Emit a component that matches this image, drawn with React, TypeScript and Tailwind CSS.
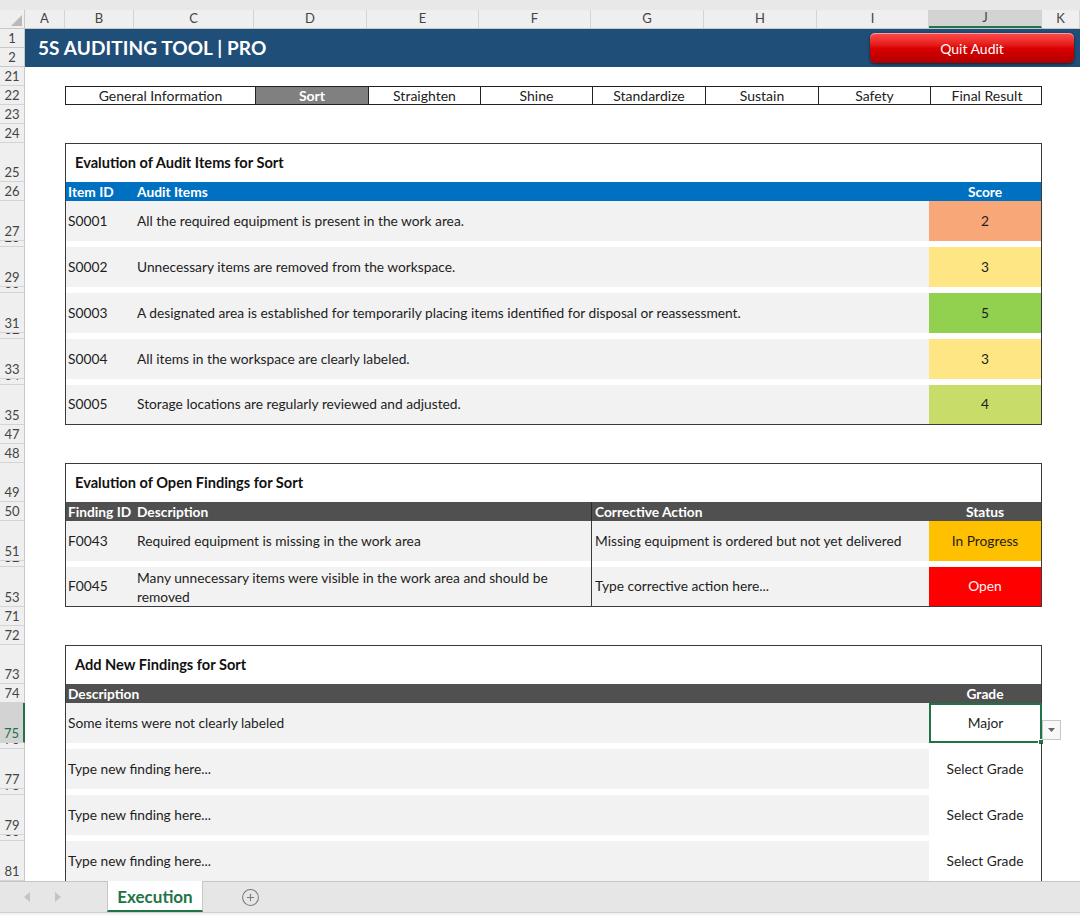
import React from "react";
import { CirclePlus } from "lucide-react";

const COLS: [string, string][] = [
  ["A", "w-[40px]"],
  ["B", "w-[69px]"],
  ["C", "w-[120px]"],
  ["D", "w-[113px]"],
  ["E", "w-[112px]"],
  ["F", "w-[112px]"],
  ["G", "w-[113px]"],
  ["H", "w-[113px]"],
  ["I", "w-[112px]"],
  ["J", "w-[113px]"],
  ["K", "w-[38px]"],
];

const TABS = [
  { label: "General Information", w: "w-[189px]" },
  { label: "Sort", w: "w-[113px]", active: true },
  { label: "Straighten", w: "w-[112px]" },
  { label: "Shine", w: "w-[112px]" },
  { label: "Standardize", w: "w-[113px]" },
  { label: "Sustain", w: "w-[113px]" },
  { label: "Safety", w: "w-[112px]" },
  { label: "Final Result", w: "w-[113px]" },
];

const AUDIT = [
  { id: "S0001", text: "All the required equipment is present in the work area.", score: 2, bg: "bg-[#f8a878]" },
  { id: "S0002", text: "Unnecessary items are removed from the workspace.", score: 3, bg: "bg-[#fee684]" },
  { id: "S0003", text: "A designated area is established for temporarily placing items identified for disposal or reassessment.", score: 5, bg: "bg-[#92d050]" },
  { id: "S0004", text: "All items in the workspace are clearly labeled.", score: 3, bg: "bg-[#fee684]" },
  { id: "S0005", text: "Storage locations are regularly reviewed and adjusted.", score: 4, bg: "bg-[#c8dc6a]" },
];

type RowProps = {
  n: string;
  h: string;
  active?: boolean;
  children?: React.ReactNode;
};

function Row({ n, h, active, children }: RowProps) {
  return (
    <div className={`flex ${h}`}>
      <div
        className={`w-[25px] shrink-0 border-b border-[#d4d4d4] flex items-end justify-center overflow-hidden text-[13px] leading-[17px] ${
          active
            ? "bg-[#d3d3d3] text-[#217346] border-r-2 border-r-[#217346]"
            : "bg-[#efefef] text-[#444] border-r border-r-[#c8c8c8]"
        }`}
      >
        {n}
      </div>
      <div className="w-[40px] shrink-0" />
      <div className="w-[977px] shrink-0 relative">{children}</div>
      <div className="flex-1" />
    </div>
  );
}

const side = "h-full border-x border-[#3a3a3a]";

function Gap({ n, split }: { n: string; split?: boolean }) {
  return (
    <Row n={n} h="h-[6px]">
      {split ? (
        <div className={`${side} flex`}>
          <div className="w-[525px]" />
          <div className="flex-1 border-l border-[#3a3a3a]" />
        </div>
      ) : (
        <div className={side} />
      )}
    </Row>
  );
}

function Title({ n, text }: { n: string; text: string }) {
  return (
    <Row n={n} h="h-[39px]">
      <div className={`${side} border-t flex items-center pl-[9px] font-bold text-[14.6px] text-[#111]`}>
        {text}
      </div>
    </Row>
  );
}

export default function App() {
  return (
    <div className="w-[1080px] h-[915px] overflow-hidden bg-white font-[Lato,Liberation_Sans,sans-serif] text-[13.75px] text-[#1e1e1e]">
      <div className="h-[10px] bg-[#e8e8e8]" />

      {/* column letters */}
      <div className="flex h-[19px] bg-[#efefef] border-b border-[#c8c8c8] text-[13px]">
        <div className="w-[25px] shrink-0 relative border-r border-[#c8c8c8]">
          <svg className="absolute right-[2px] bottom-[2px]" width="11" height="11" viewBox="0 0 11 11">
            <polygon points="11,0 11,11 0,11" fill="#b9b9b9" />
          </svg>
        </div>
        {COLS.map(([c, w]) => (
          <div
            key={c}
            className={`${w} shrink-0 flex items-center justify-center border-r border-[#d4d4d4] text-[#444] ${
              c === "J" ? "bg-[#d3d3d3] border-b-2 border-b-[#217346]" : ""
            }`}
          >
            {c}
          </div>
        ))}
        <div className="flex-1" />
      </div>

      {/* banner */}
      <div className="flex h-[38px]">
        <div className="w-[25px] shrink-0 flex flex-col text-[13px]">
          {["1", "2"].map((n) => (
            <div
              key={n}
              className="h-[19px] bg-[#efefef] border-b border-r border-[#c8c8c8] flex items-end justify-center leading-[17px] text-[#444]"
            >
              {n}
            </div>
          ))}
        </div>
        <div className="flex-1 bg-[#1f4e79] flex items-center justify-between pl-[13px] pr-[6px]">
          <span className="text-white font-bold text-[19px] tracking-[0.1px]">5S AUDITING TOOL | PRO</span>
          <button className="w-[204px] h-[30px] rounded-[5px] bg-linear-to-b from-[#ff4a4a] via-[#dc0000] to-[#b00000] shadow-[inset_0_1px_0_rgba(255,255,255,0.45),0_1px_3px_rgba(0,0,0,0.6)] text-white text-[14px]">
            Quit Audit
          </button>
        </div>
      </div>

      <Row n="21" h="h-[19px]" />
      <Row n="22" h="h-[19px]">
        <div className="h-full flex border border-[#222]">
          {TABS.map((t, i) => (
            <div
              key={t.label}
              className={`${t.w} shrink-0 flex items-center justify-center text-[14px] ${
                i > 0 ? "border-l border-[#222]" : ""
              } ${t.active ? "bg-[#808080] text-white font-bold" : "text-[#222]"}`}
            >
              {t.label}
            </div>
          ))}
        </div>
      </Row>
      <Row n="23" h="h-[19px]" />
      <Row n="24" h="h-[19px]" />

      {/* audit items */}
      <Title n="25" text="Evalution of Audit Items for Sort" />
      <Row n="26" h="h-[19px]">
        <div className={`${side} bg-[#0070c0] grid grid-cols-[68px_795px_112px] items-center font-bold text-white`}>
          <span className="pl-[2px]">Item ID</span>
          <span className="pl-[3px]">Audit Items</span>
          <span className="text-center">Score</span>
        </div>
      </Row>
      {AUDIT.map((a, i) => {
        const n = 27 + i * 2;
        const last = i === AUDIT.length - 1;
        return (
          <React.Fragment key={a.id}>
            <Row n={String(n)} h="h-[40px]">
              <div className={`${side} ${last ? "border-b" : ""} grid grid-cols-[68px_795px_112px]`}>
                <div className="bg-[#f2f2f2] flex items-center pl-[2px]">{a.id}</div>
                <div className="bg-[#f2f2f2] flex items-center pl-[3px]">{a.text}</div>
                <div className={`${a.bg} flex items-center justify-center`}>{a.score}</div>
              </div>
            </Row>
            {!last && <Gap n={String(n + 1)} />}
          </React.Fragment>
        );
      })}
      <Row n="47" h="h-[19px]" />
      <Row n="48" h="h-[19px]" />

      {/* open findings */}
      <Title n="49" text="Evalution of Open Findings for Sort" />
      <Row n="50" h="h-[19px]">
        <div className={`${side} bg-[#505050] grid grid-cols-[68px_457px_338px_112px] items-center font-bold text-white`}>
          <span className="pl-[2px] whitespace-nowrap">Finding ID</span>
          <span className="pl-[3px]">Description</span>
          <span className="h-full flex items-center pl-[3px] border-l border-[#2a2a2a]">Corrective Action</span>
          <span className="text-center">Status</span>
        </div>
      </Row>
      <Row n="51" h="h-[40px]">
        <div className={`${side} grid grid-cols-[68px_457px_338px_112px]`}>
          <div className="bg-[#f2f2f2] flex items-center pl-[2px]">F0043</div>
          <div className="bg-[#f2f2f2] flex items-center pl-[3px]">Required equipment is missing in the work area</div>
          <div className="bg-[#f2f2f2] flex items-center pl-[3px] border-l border-[#3a3a3a]">
            Missing equipment is ordered but not yet delivered
          </div>
          <div className="bg-[#ffc000] flex items-center justify-center">In Progress</div>
        </div>
      </Row>
      <Gap n="52" split />
      <Row n="53" h="h-[40px]">
        <div className={`${side} border-b grid grid-cols-[68px_457px_338px_112px]`}>
          <div className="bg-[#f2f2f2] flex items-center pl-[2px]">F0045</div>
          <div className="bg-[#f2f2f2] flex items-center pl-[3px] leading-[19px]">
            <span>
              <span className="whitespace-nowrap">Many unnecessary items were visible in the work area and should be</span>
              <br />
              removed
            </span>
          </div>
          <div className="bg-[#f2f2f2] flex items-center pl-[3px] border-l border-[#3a3a3a]">
            Type corrective action here...
          </div>
          <div className="bg-[#ff0000] flex items-center justify-center text-[#fff2f2]">Open</div>
        </div>
      </Row>
      <Row n="71" h="h-[19px]" />
      <Row n="72" h="h-[19px]" />

      {/* new findings */}
      <Title n="73" text="Add New Findings for Sort" />
      <Row n="74" h="h-[19px]">
        <div className={`${side} bg-[#505050] grid grid-cols-[863px_112px] items-center font-bold text-white`}>
          <span className="pl-[2px]">Description</span>
          <span className="text-center">Grade</span>
        </div>
      </Row>
      <Row n="75" h="h-[40px]" active>
        <div className={`${side} grid grid-cols-[863px_112px]`}>
          <div className="bg-[#f2f2f2] flex items-center pl-[2px]">Some items were not clearly labeled</div>
          <div className="relative -mr-[1px] border-2 border-[#217346] bg-white flex items-center justify-center">
            Major
            <span className="absolute -right-[4px] -bottom-[4px] w-[6px] h-[6px] bg-[#217346] border border-white" />
            <span className="absolute left-full ml-[2px] top-[15px] w-[19px] h-[20px] bg-[#f8f8f8] border border-[#c6c6c6] flex items-center justify-center">
              <svg width="7" height="4" viewBox="0 0 7 4">
                <polygon points="0,0 7,0 3.5,4" fill="#666" />
              </svg>
            </span>
          </div>
        </div>
      </Row>
      {["77", "79", "81"].map((n) => (
        <React.Fragment key={n}>
          <Gap n={String(Number(n) - 1)} />
          <Row n={n} h="h-[40px]">
            <div className={`${side} grid grid-cols-[863px_112px]`}>
              <div className="bg-[#f2f2f2] flex items-center pl-[2px]">Type new finding here...</div>
              <div className="bg-white flex items-center justify-center">Select Grade</div>
            </div>
          </Row>
        </React.Fragment>
      ))}

      {/* sheet tabs */}
      <div className="h-[31px] bg-[#e6e6e6] border-t border-[#c6c6c6] flex items-stretch">
        <div className="w-[107px] shrink-0 flex items-center">
          <svg className="ml-[24px]" width="6" height="10" viewBox="0 0 6 10">
            <polygon points="6,0 6,10 0,5" fill="#c4c4c4" />
          </svg>
          <svg className="ml-[25px]" width="6" height="10" viewBox="0 0 6 10">
            <polygon points="0,0 0,10 6,5" fill="#c4c4c4" />
          </svg>
        </div>
        <div className="w-[96px] -mt-px bg-white border-x border-[#c6c6c6] border-b-2 border-b-[#217346] flex items-center justify-center pt-[2px] font-bold text-[17px] text-[#217346]">
          Execution
        </div>
        <div className="flex-1 flex items-center pl-[38px]">
          <CirclePlus size={19} strokeWidth={1.3} color="#7a7a7a" />
        </div>
      </div>
      <div className="h-[3px] bg-[#f3f3f3] border-t border-[#d0d0d0]" />
    </div>
  );
}
